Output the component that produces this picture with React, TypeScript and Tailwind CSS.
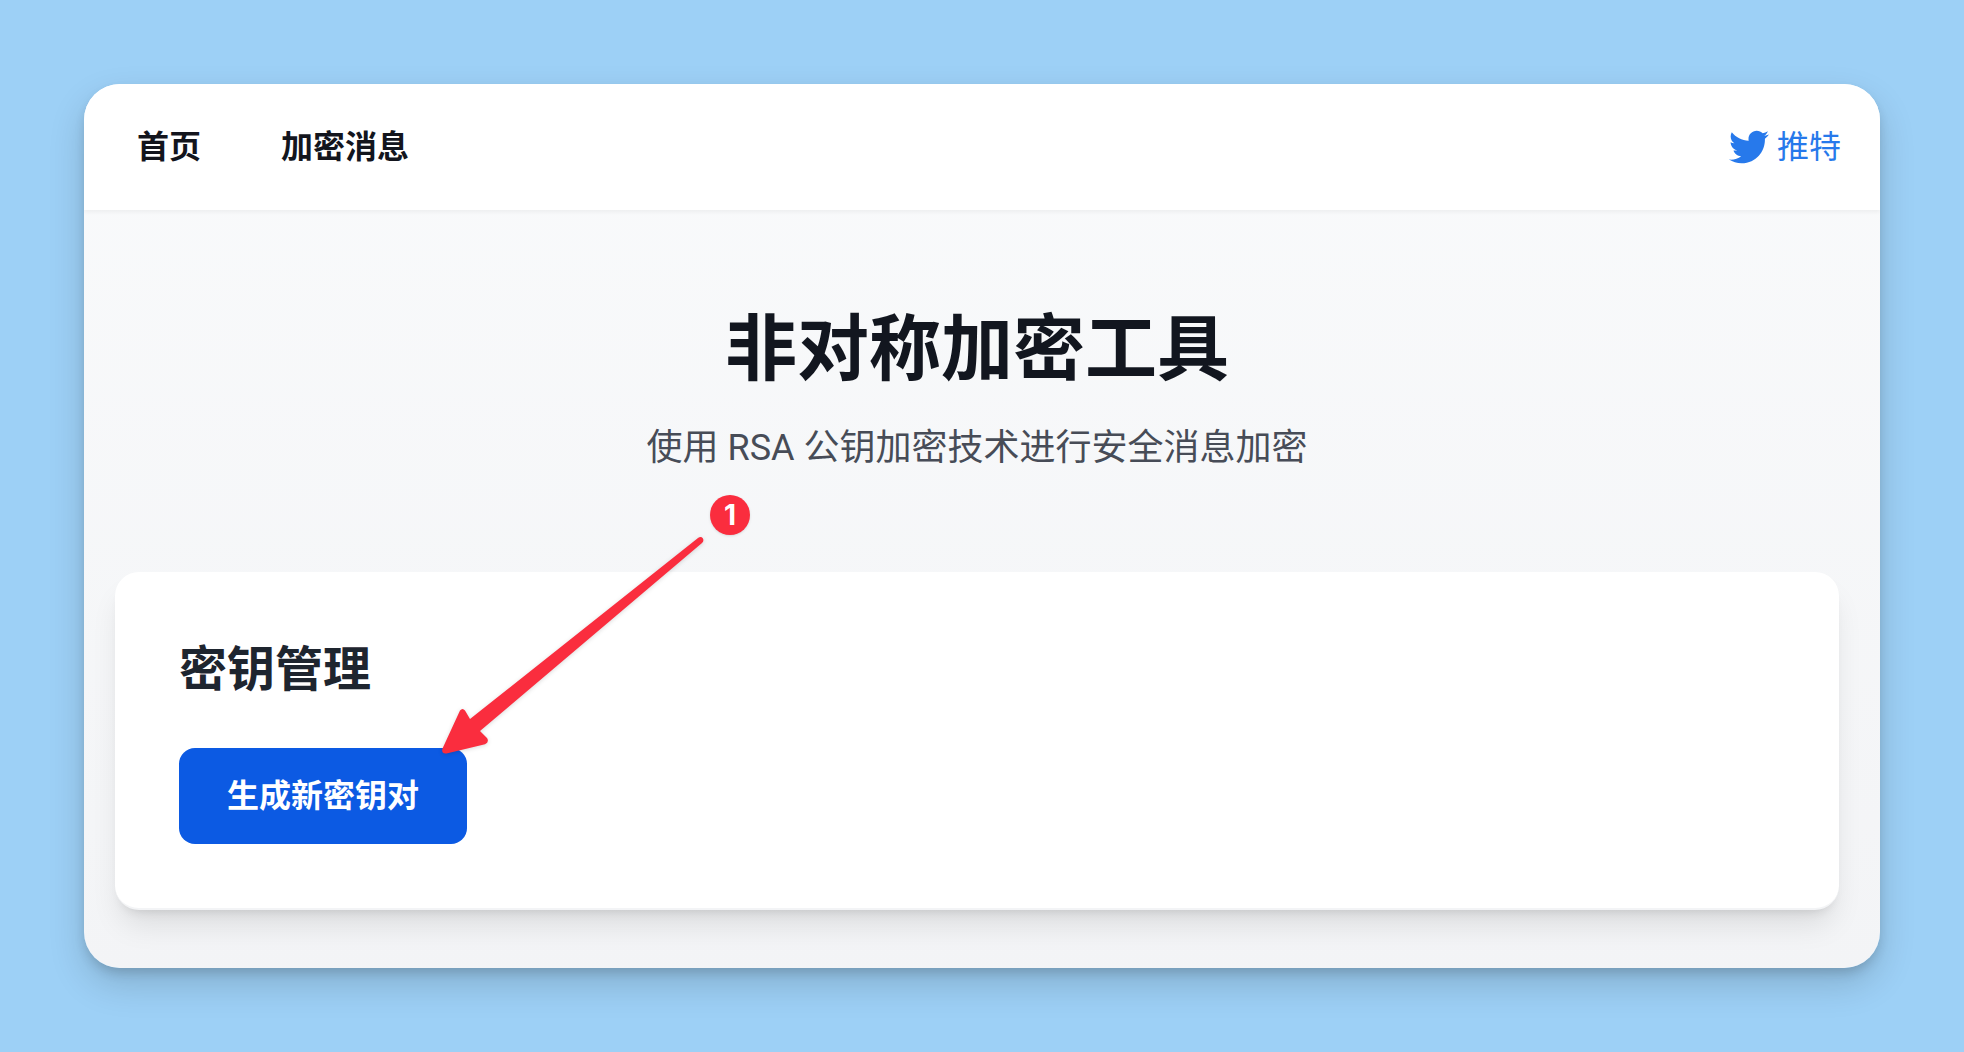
import { FaTwitter } from "react-icons/fa";

const navLinks = [
  { label: "首页", href: "#home" },
  { label: "加密消息", href: "#encrypt" },
];

function Navbar() {
  return (
    <nav className="relative flex h-[126px] items-center justify-between bg-white pl-[53px] pr-[39px] shadow-[0_2px_4px_rgba(0,0,0,0.05)]">
      <div className="flex items-center gap-20">
        {navLinks.map((link) => (
          <a
            key={link.href}
            href={link.href}
            className="text-[32px] leading-10 font-bold text-[#13151d]"
          >
            {link.label}
          </a>
        ))}
      </div>
      <a
        href="#twitter"
        className="flex items-center gap-2 text-[32px] leading-10 text-[#2779eb]"
      >
        <FaTwitter className="size-10" />
        推特
      </a>
    </nav>
  );
}

function KeyManager() {
  return (
    <section className="rounded-3xl border-b-2 border-gray-100 bg-white p-16 shadow-[0_20px_30px_-6px_rgba(0,0,0,0.1),0_8px_12px_-8px_rgba(0,0,0,0.15)]">
      <h2 className="pt-[2px] text-5xl leading-16 font-bold text-[#1e252f]">
        密钥管理
      </h2>
      <button
        type="button"
        className="mt-[46px] h-24 rounded-2xl bg-[#0c5ae3] px-12 text-[32px] leading-10 font-bold text-white"
      >
        生成新密钥对
      </button>
    </section>
  );
}

// Numbered callout with an arrow to the generate button
function StepCallout() {
  return (
    <div className="pointer-events-none absolute top-[411px] left-[350px] h-70 w-80">
      <svg
        viewBox="0 1 320 280"
        className="size-full drop-shadow-sm"
        aria-hidden="true"
      >
        <path
          d="M264 44 Q267 42 268.8 44.3 Q270.3 46.8 268 49 L46 237 L53 244 Q55.5 248 51 250.2 L12.5 259.4 Q7 260 8.5 254.5 L26 216.5 Q28.5 213.5 31 216.5 L36 225 Z"
          fill="#fa2d3e"
        />
      </svg>
      <span className="absolute top-0 right-1 flex size-10 items-center justify-center rounded-full bg-[#fa2d3e] font-[Inter] text-[28px] leading-10 font-bold text-white shadow-sm">
        1
      </span>
    </div>
  );
}

function App() {
  return (
    <div className="min-h-screen bg-[#9dd0f6] p-21 font-['Roboto','Noto_Sans_CJK_SC',sans-serif]">
      <div className="relative overflow-clip rounded-[36px] bg-linear-to-b from-gray-50 to-gray-100 shadow-[0_16px_36px_rgba(0,0,0,0.16),0_6px_12px_-2px_rgba(0,0,0,0.16)]">
        <Navbar />
        <main className="pt-[100px] pr-[41px] pb-[58px] pl-[31px]">
          <header className="mb-24 text-center">
            <h1 className="text-7xl leading-20 font-bold text-[#12161f]">
              非对称加密工具
            </h1>
            <p className="mt-[30px] text-4xl leading-14 text-[#474c57]">
              使用 RSA 公钥加密技术进行安全消息加密
            </p>
          </header>
          <KeyManager />
        </main>
        <StepCallout />
      </div>
    </div>
  );
}

export default App;
